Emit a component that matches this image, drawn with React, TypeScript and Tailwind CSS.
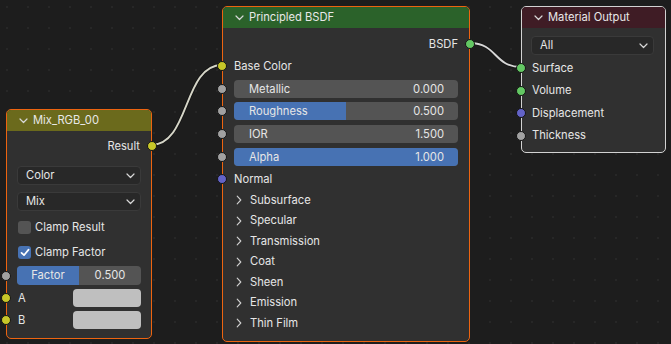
import React from "react";

type SocketColor = "yellow" | "gray" | "green" | "purple";

const socketBg: Record<SocketColor, string> = {
  yellow: "bg-[#c7c729]",
  gray: "bg-[#a1a1a1]",
  green: "bg-[#63c763]",
  purple: "bg-[#6363c7]",
};

function Socket({ color, side }: { color: SocketColor; side: "left" | "right" }) {
  return (
    <span
      className={`absolute top-1/2 h-[10px] w-[10px] -translate-y-1/2 rounded-full border border-[#141414] ${socketBg[color]} ${
        side === "left" ? "-left-[6px]" : "-right-[6px]"
      }`}
    />
  );
}

function ChevronDown({ className = "" }: { className?: string }) {
  return (
    <svg width="9" height="6" viewBox="0 0 9 6" className={className}>
      <path d="M1 1 L4.5 4.5 L8 1" fill="none" stroke="#d8d8d8" strokeWidth="1.2" strokeLinecap="round" strokeLinejoin="round" />
    </svg>
  );
}

function ChevronRight() {
  return (
    <svg width="6" height="10" viewBox="0 0 6 10" className="shrink-0">
      <path d="M1.2 1.2 L4.8 5 L1.2 8.8" fill="none" stroke="#d0d0d0" strokeWidth="1.1" strokeLinecap="round" strokeLinejoin="round" />
    </svg>
  );
}

function Header({ title, color }: { title: string; color: string }) {
  return (
    <div className={`flex h-[21px] items-center gap-[5px] rounded-t-[4px] pl-[12px] ${color}`}>
      <ChevronDown />
      <span className="text-[11.2px] text-[#e8e8e8]">{title}</span>
    </div>
  );
}

function Slider({ label, value, fill }: { label: string; value: string; fill: number }) {
  return (
    <div className="relative flex h-[18px] items-center justify-between overflow-hidden rounded-[4px] bg-[#545454] pl-[15px] pr-[14px]">
      <div className="absolute inset-y-0 left-0 bg-[#4772b3]" style={{ width: `${fill * 100}%` }} />
      <span className="relative text-[11.2px] text-[#e6e6e6]">{label}</span>
      <span className="relative text-[11.2px] text-[#e6e6e6]">{value}</span>
    </div>
  );
}

function Dropdown({ label }: { label: string }) {
  return (
    <div className="flex h-[19px] items-center justify-between rounded-[4px] border border-[#3a3a3a] bg-[#282828] pl-[8px] pr-[5px]">
      <span className="text-[11.2px] text-[#e6e6e6]">{label}</span>
      <ChevronDown />
    </div>
  );
}

function MixNode() {
  return (
    <div className="absolute left-[6px] top-[109px] w-[146px] rounded-[5px] border border-[#ed6410] bg-[#303030]">
      <Header title="Mix_RGB_00" color="bg-[#6b6a1c]" />
      <div className="flex flex-col px-[10px] pb-[9px]">
        <div className="relative -mx-[10px] mt-[5px] flex h-[20px] items-center justify-end pr-[11px]">
          <span className="text-[11.2px] text-[#e6e6e6]">Result</span>
          <Socket color="yellow" side="right" />
        </div>
        <div className="mt-[10px]">
          <Dropdown label="Color" />
        </div>
        <div className="mt-[7px]">
          <Dropdown label="Mix" />
        </div>
        <div className="mt-[6px] flex h-[20px] items-center gap-[4px] pl-[1px]">
          <span className="h-[13px] w-[13px] rounded-[3px] bg-[#545454]" />
          <span className="text-[11.2px] text-[#e6e6e6]">Clamp Result</span>
        </div>
        <div className="mt-[5px] flex h-[20px] items-center gap-[4px] pl-[1px]">
          <span className="flex h-[13px] w-[13px] items-center justify-center rounded-[3px] bg-[#4772b3]">
            <svg width="10" height="9" viewBox="0 0 10 9">
              <path d="M1.5 4.8 L4 7.2 L8.6 1.6" fill="none" stroke="#ffffff" strokeWidth="1.7" strokeLinecap="round" strokeLinejoin="round" />
            </svg>
          </span>
          <span className="text-[11.2px] text-[#e6e6e6]">Clamp Factor</span>
        </div>
        <div className="relative mt-[4px]">
          <div className="relative flex h-[19px] items-center overflow-hidden rounded-[4px] bg-[#545454]">
            <div className="flex h-full w-1/2 items-center justify-center bg-[#4772b3]">
              <span className="text-[11.2px] text-[#e6e6e6]">Factor</span>
            </div>
            <div className="flex h-full w-1/2 items-center justify-center">
              <span className="text-[11.2px] text-[#e6e6e6]">0.500</span>
            </div>
          </div>
          <span className="absolute -left-[16px] top-1/2 h-[10px] w-[10px] -translate-y-1/2 rounded-full border border-[#141414] bg-[#a1a1a1]" />
        </div>
        {["A", "B"].map((l) => (
          <div key={l} className="relative -mx-[10px] mt-[4px] flex h-[18px] items-center justify-between pl-[11px] pr-[10px]">
            <span className="text-[11.2px] text-[#e6e6e6]">{l}</span>
            <span className="h-[18px] w-[68px] rounded-[4px] bg-[#bfbfbf]" />
            <Socket color="yellow" side="left" />
          </div>
        ))}
      </div>
    </div>
  );
}

function BsdfNode() {
  const panels = ["Subsurface", "Specular", "Transmission", "Coat", "Sheen", "Emission", "Thin Film"];
  const sliders = [
    { label: "Metallic", value: "0.000", fill: 0, mt: "mt-[4px]" },
    { label: "Roughness", value: "0.500", fill: 0.5, mt: "mt-[4px]" },
    { label: "IOR", value: "1.500", fill: 0, mt: "mt-[5px]" },
    { label: "Alpha", value: "1.000", fill: 1, mt: "mt-[5px]" },
  ];
  return (
    <div className="absolute left-[222px] top-[6px] w-[248px] rounded-[5px] border border-[#ed6410] bg-[#303030]">
      <Header title="Principled BSDF" color="bg-[#2b622a]" />
      <div className="flex flex-col pb-[7px]">
        <div className="relative mt-[6px] flex h-[20px] items-center justify-end pr-[11px]">
          <span className="text-[11.2px] text-[#e6e6e6]">BSDF</span>
          <Socket color="green" side="right" />
        </div>
        <div className="relative mt-[2px] flex h-[20px] items-center pl-[11px]">
          <span className="text-[11.2px] text-[#e6e6e6]">Base Color</span>
          <Socket color="yellow" side="left" />
        </div>
        {sliders.map((s) => (
          <div key={s.label} className={`relative ${s.mt} pl-[11px] pr-[11px]`}>
            <Slider label={s.label} value={s.value} fill={s.fill} />
            <Socket color="gray" side="left" />
          </div>
        ))}
        <div className="relative mt-[3px] flex h-[20px] items-center pl-[11px]">
          <span className="text-[11.2px] text-[#e6e6e6]">Normal</span>
          <Socket color="purple" side="left" />
        </div>
        <div className="mt-[1px] flex flex-col">
          {panels.map((p) => (
            <div key={p} className="flex h-[20.5px] items-center gap-[8px] pl-[13px]">
              <ChevronRight />
              <span className="text-[11.2px] text-[#e6e6e6]">{p}</span>
            </div>
          ))}
        </div>
      </div>
    </div>
  );
}

function OutputNode() {
  const inputs: { label: string; color: SocketColor }[] = [
    { label: "Surface", color: "green" },
    { label: "Volume", color: "green" },
    { label: "Displacement", color: "purple" },
    { label: "Thickness", color: "gray" },
  ];
  return (
    <div className="absolute left-[521px] top-[6px] w-[145px] rounded-[5px] border border-[#d2d2d2] bg-[#303030]">
      <Header title="Material Output" color="bg-[#3f1c25]" />
      <div className="flex flex-col pb-[5px]">
        <div className="mt-[8px] pl-[9px] pr-[11px]">
          <Dropdown label="All" />
        </div>
        <div className="mt-[2px] flex flex-col">
          {inputs.map((i) => (
            <div key={i.label} className="relative flex h-[22.5px] items-center pl-[10px]">
              <span className="text-[11.2px] text-[#e6e6e6]">{i.label}</span>
              <Socket color={i.color} side="left" />
            </div>
          ))}
        </div>
      </div>
    </div>
  );
}

export default function App() {
  return (
    <div
      className="relative h-[344px] w-[671px] overflow-hidden bg-[#1d1d1d] bg-[radial-gradient(circle_at_7px_7px,#272727_0.8px,transparent_1.4px)] bg-size-[21px_21px]"
      style={{ fontFamily: "Inter, 'DejaVu Sans', sans-serif" }}
    >
      <svg className="absolute inset-0" width="671" height="344">
        <path d="M151 145 C190 145 183 65 222 65" fill="none" stroke="#151515" strokeWidth="3.5" />
        <path d="M151 145 C190 145 183 65 222 65" fill="none" stroke="#d6d6c8" strokeWidth="2" />
        <path d="M470 43 C497 43 494 67 521 67" fill="none" stroke="#151515" strokeWidth="3.5" />
        <path d="M470 43 C497 43 494 67 521 67" fill="none" stroke="#d6d6d6" strokeWidth="2" />
      </svg>
      <MixNode />
      <BsdfNode />
      <OutputNode />
    </div>
  );
}
